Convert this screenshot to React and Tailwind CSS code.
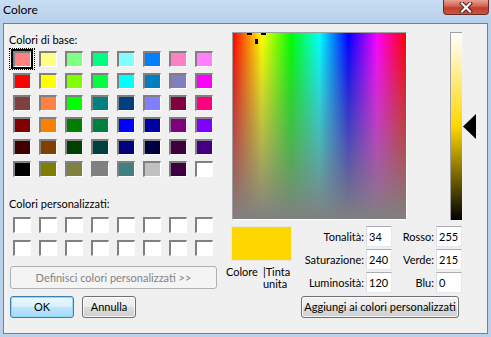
const BASE = [
  ["#ff8080", "#ffff80", "#80ff80", "#00ff80", "#80ffff", "#0080ff", "#ff80c0", "#ff80ff"],
  ["#ff0000", "#ffff00", "#80ff00", "#00ff40", "#00ffff", "#0080c0", "#8080c0", "#ff00ff"],
  ["#804040", "#ff8040", "#00ff00", "#008080", "#004080", "#8080ff", "#800040", "#ff0080"],
  ["#800000", "#ff8000", "#008000", "#008040", "#0000ff", "#0000a0", "#800080", "#8000ff"],
  ["#400000", "#804000", "#004000", "#004040", "#000080", "#000040", "#400040", "#400080"],
  ["#000000", "#808000", "#808040", "#808080", "#408080", "#c0c0c0", "#400040", "#ffffff"],
];

function Swatch({ color }) {
  return (
    <div
      className="w-[18px] h-[16px] border-t-2 border-l-2 border-r border-b border-t-[#808080] border-l-[#808080] border-r-white border-b-white"
      style={{ backgroundColor: color }}
    />
  );
}

function Field({ label, value }) {
  return (
    <>
      <div className="text-right leading-[21px] whitespace-nowrap">{label}</div>
      <div className="h-[21px] bg-white border border-[#e3e9ef] border-t-[#abadb3] border-l-[#dbdfe6] pl-[2px] leading-[19px]">
        {value}
      </div>
    </>
  );
}

const btn =
  "h-[22px] rounded-[3px] border border-[#707070] bg-[image:linear-gradient(to_bottom,#f2f2f2_0%,#ebebeb_50%,#dddddd_50%,#cfcfcf_100%)] shadow-[inset_0_0_0_1px_rgba(255,255,255,0.75)] leading-[20px] text-center whitespace-nowrap";

export default function App() {
  return (
    <div className="w-[491px] h-[337px] bg-[#b9d1ea] flex flex-col text-[11px] text-black font-['Lato','Noto_Sans',sans-serif] overflow-hidden">
      {/* title bar */}
      <div className="h-[23px] flex justify-between bg-[image:linear-gradient(to_bottom,#c9def3,#b7cfea)]">
        <div className="pl-[3px] pt-[2px] leading-[16px] text-[12px]">Colore</div>
        <div className="mr-[2px] w-[46px] h-[15px] rounded-b-[4px] border border-t-0 border-[#6b2a24] bg-[image:linear-gradient(to_bottom,#e8a093_0%,#d2604f_45%,#c23f2c_55%,#c8553f_100%)] flex items-center justify-center">
          <svg width="14" height="11" viewBox="0 0 14 11">
            <path d="M3 1.5 L11 9.5 M11 1.5 L3 9.5" stroke="#4a1a14" strokeWidth="4" strokeLinecap="square" />
            <path d="M3 1.5 L11 9.5 M11 1.5 L3 9.5" stroke="#ffffff" strokeWidth="2.2" strokeLinecap="square" />
          </svg>
        </div>
      </div>

      {/* client area */}
      <div className="mx-[3px] mb-[3px] flex-1 border border-[#6f8296] bg-[#f0f0f0] flex">
        {/* left column */}
        <div className="w-[222px] flex flex-col">
          <div className="mt-[8px] ml-[5px] leading-[16px]">Colori di base:</div>
          <div className="ml-[5px] grid grid-cols-[repeat(8,26px)]">
            {BASE.flat().map((c, i) =>
              i === 0 ? (
                <div key={i} className="h-[22px] border border-dotted border-black flex items-center justify-center">
                  <div className="w-[22px] h-[20px] border-2 border-black flex items-center justify-center">
                    <Swatch color={c} />
                  </div>
                </div>
              ) : (
                <div key={i} className="h-[22px] flex items-center justify-center">
                  <Swatch color={c} />
                </div>
              )
            )}
          </div>
          <div className="mt-[16px] ml-[5px] leading-[16px]">Colori personalizzati:</div>
          <div className="mt-[2px] ml-[5px] grid grid-cols-[repeat(8,26px)]">
            {Array.from({ length: 16 }).map((_, i) => (
              <div key={i} className="h-[23px] pt-[3px] flex justify-center">
                <Swatch color="#ffffff" />
              </div>
            ))}
          </div>
          <div className="mt-[6px] ml-[6px] w-[207px] h-[23px] rounded-[3px] border border-[#adb2b5] bg-[#f4f4f4] text-[#838383] text-center leading-[21px]">
            Definisci colori personalizzati &gt;&gt;
          </div>
          <div className="mt-[7px] ml-[6px] flex gap-[8px]">
            <div className="w-[64px] h-[22px] rounded-[3px] border border-[#3c7fb1] bg-[image:linear-gradient(to_bottom,#eaf6fd_0%,#d9f0fc_50%,#bee6fd_50%,#a7d9f5_100%)] shadow-[inset_0_0_0_1px_#8fd8f6] text-center leading-[20px]">
              OK
            </div>
            <div className={`w-[54px] ${btn}`}>Annulla</div>
          </div>
        </div>

        {/* right column */}
        <div className="flex-1 flex flex-col">
          <div className="mt-[8px] flex items-start">
            <div className="relative ml-[6px] w-[175px] h-[188px] border-t border-l border-t-[#a0a0a0] border-l-[#a0a0a0] border-r border-b border-r-white border-b-white bg-[image:linear-gradient(to_bottom,rgba(128,128,128,0),#808080),linear-gradient(to_right,#ff0000,#ffff00,#00ff00,#00ffff,#0000ff,#ff00ff,#ff0000)]">
              <div className="absolute left-[14px] top-0 w-[5px] h-[2px] bg-black" />
              <div className="absolute left-[28px] top-0 w-[5px] h-[2px] bg-black" />
              <div className="absolute left-[22px] top-[6px] w-[3px] h-[5px] bg-black" />
            </div>
            <div className="ml-[43px] w-[12px] h-[188px] border-t border-l border-[#a0a0a0] bg-[image:linear-gradient(to_bottom,#ffffff,#ffd700_50%,#000000)]" />
            <svg className="mt-[82px] ml-[1px]" width="13" height="25" viewBox="0 0 13 25">
              <polygon points="0,12.5 13,0 13,25" fill="#000" />
            </svg>
          </div>

          <div className="mt-[6px] flex">
            <div className="ml-[5px] w-[61px]">
              <div className="h-[35px] bg-[#ffd700] border border-[#e8e8e8]" />
              <div className="mt-[5px] -ml-[5px] flex leading-[12px] whitespace-nowrap">
                <span>Colore</span>
                <span className="ml-[5px]">
                  |Tinta
                  <br />
                  unita
                </span>
              </div>
            </div>
            <div className="flex flex-col">
              <div className="grid grid-cols-[72px_26px_40px_26px] gap-x-[2px] gap-y-[2px]">
                <Field label="Tonalità:" value="34" />
                <Field label="Rosso:" value="255" />
                <Field label="Saturazione:" value="240" />
                <Field label="Verde:" value="215" />
                <Field label="Luminosità:" value="120" />
                <Field label="Blu:" value="0" />
              </div>
              <div className={`mt-[3px] ml-[9px] w-[158px] ${btn}`}>Aggiungi ai colori personalizzati</div>
            </div>
          </div>
        </div>
      </div>
    </div>
  );
}
